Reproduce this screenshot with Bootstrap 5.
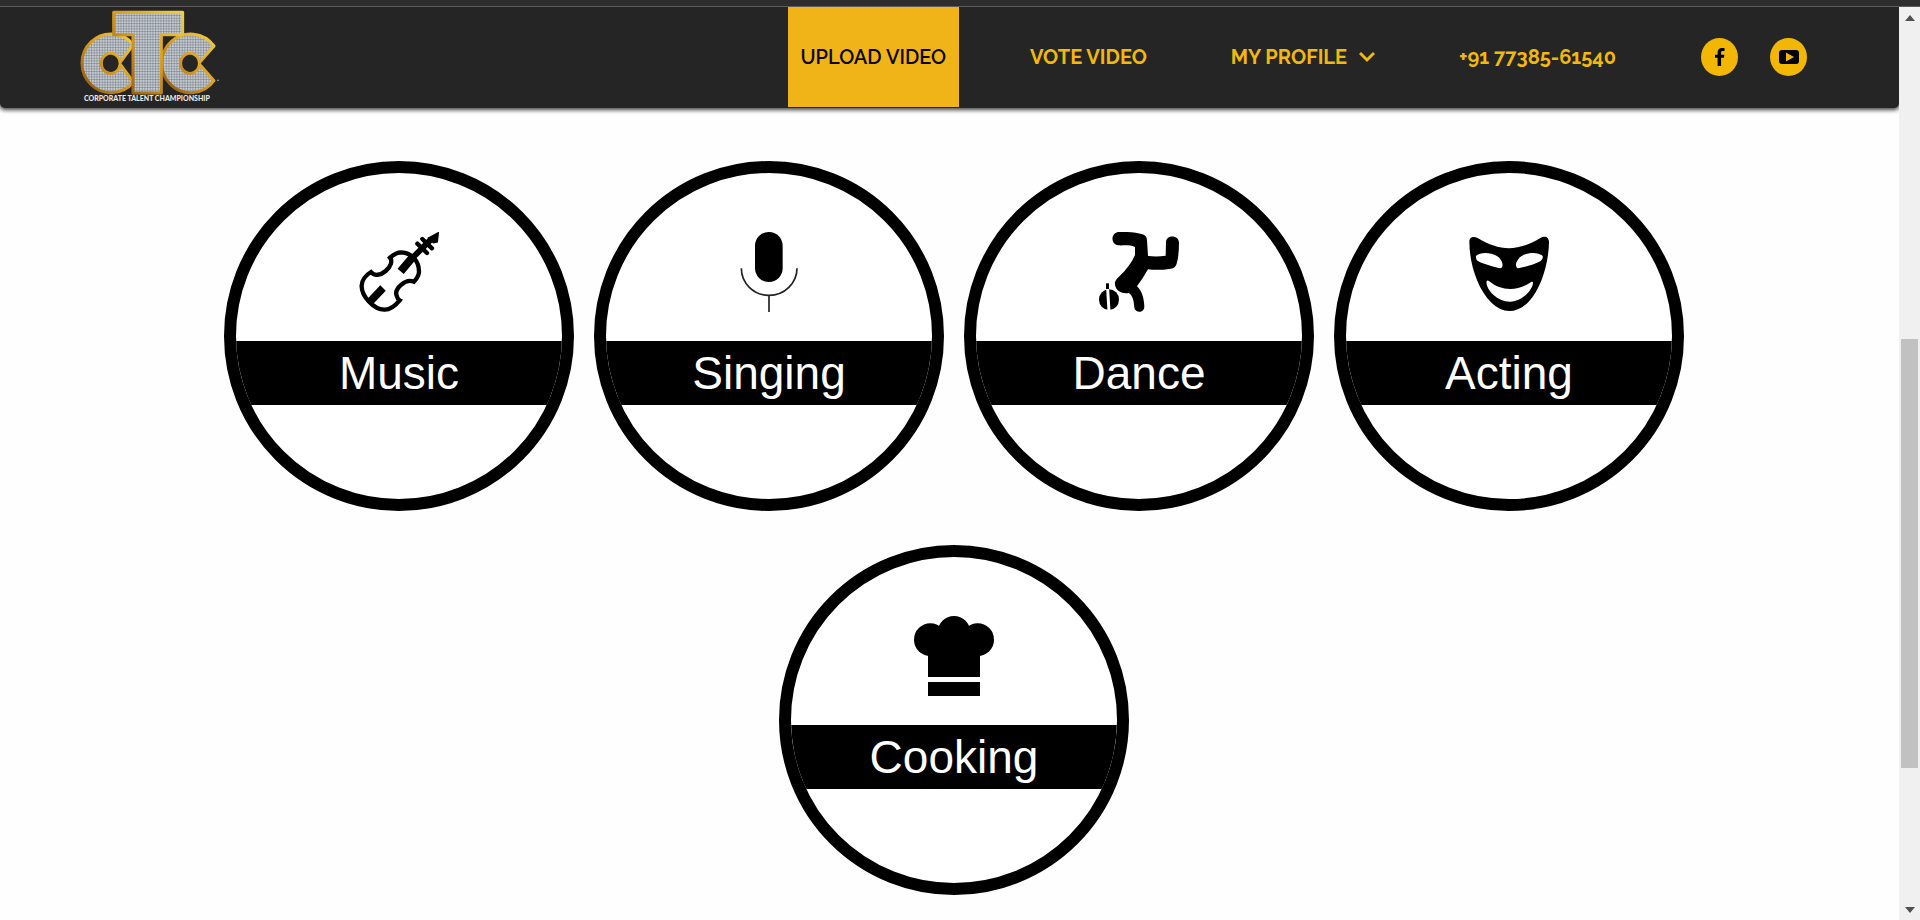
<!DOCTYPE html>
<html lang="en">
<head>
<meta charset="utf-8">
<meta name="viewport" content="width=device-width, initial-scale=1">
<title>Corporate Talent Championship</title>
<link href="https://cdn.jsdelivr.net/npm/bootstrap@5.3.0/dist/css/bootstrap.min.css" rel="stylesheet">
<style>
  body { font-family: "Liberation Sans", Arial, sans-serif; background: #2d2d2d; }
  .top-strip { height: 7px; background: #2d2d2d; border-bottom: 1px solid #5c5c5c; }
  .page-pane { background: #fefefe; min-width: 0; }
  .site-header { height: 101px; background: #252525; border-radius: 0 0 5px 5px; box-shadow: 0 1px 4px 1px rgba(0,0,0,.75); padding: 0 92px 0 80px; }
  .site-header .navbar-brand { padding: 0; margin: 0; }
  .main-menu { gap: 58px; font-family: Raleway, Lato, sans-serif; font-size: 20px; font-weight: 700; }
  .navbar-expand .main-menu .nav-link { height: 100px; padding: 0 13px; color: #f1b80d; white-space: nowrap; }
  .navbar-expand .main-menu .nav-link.active { background: #f0b418; color: #0b0600; font-weight: 600; }
  .profile-link { gap: 12px; }
  .social { gap: 32px; margin-left: 72px; height: 100px; }
  .social a { width: 37px; height: 38px; background: #f2b705; color: #000; }
  .categories { gap: 34px 20px; padding: 53px 200px 0 209px; }
  .disc { width: 350px; height: 350px; border: 12px solid #000; padding-top: 59px; color: #000; overflow: hidden; background: #fff; }
  .disc svg { width: 80px; height: 80px; margin-bottom: 29px; }
  .disc-label { height: 64px; line-height: 64px; font-size: 46px; background: #000; color: #fff; }
  .scroll-rail { width: 21px; background: #f0f0f0; }
  .rail-arrow { height: 21px; }
  .rail-thumb { background: #c1c1c1; margin: 0 2px; }
</style>
</head>
<body class="vh-100 overflow-hidden d-flex flex-column">
<div class="top-strip flex-shrink-0"></div>
<div class="d-flex flex-grow-1 overflow-hidden">
  <div class="page-pane flex-grow-1 overflow-hidden">
    <header class="site-header navbar navbar-expand flex-nowrap align-items-start">
      <a class="navbar-brand" href="#" aria-label="Corporate Talent Championship">
        <svg class="d-block" width="142" height="100" viewBox="0 0 142 100">
          <defs>
            <linearGradient id="gold" x1="0" x2="1" y1="1" y2="0"><stop offset="0" stop-color="#87500e"/><stop offset=".5" stop-color="#d79b20"/><stop offset="1" stop-color="#f1cf3e"/></linearGradient>
            <pattern id="studs" width="8" height="8" patternUnits="userSpaceOnUse"><rect width="8" height="8" fill="#858a94"/><rect width="6" height="6" fill="#c5ccd0"/></pattern>
          </defs>
          <g transform="scale(.3333) translate(-60 -21)" fill="url(#studs)" stroke="url(#gold)" stroke-width="9" stroke-linejoin="round">
            <path d="M220 134A87 88 0 1 0 220 246L180 192A28 30 0 1 1 180 188Z"/>
            <path d="M462 138A87 88 0 1 0 462 242L418 192A28 30 0 1 1 418 188Z"/>
            <path d="M161 37H368V104H304V279H219V104H161Z"/>
            <circle cx="474" cy="241" r="2" stroke-width="1" stroke="#aaa"/>
          </g>
          <text x="4" y="94" font-family="Lato, sans-serif" font-weight="900" font-size="7" fill="#e9e9e9">CORPORATE TALENT CHAMPIONSHIP</text>
        </svg>
      </a>
      <nav class="navbar-nav main-menu ms-auto">
        <a class="nav-link active d-flex align-items-center" href="#">UPLOAD VIDEO</a>
        <a class="nav-link d-flex align-items-center" href="#">VOTE VIDEO</a>
        <a class="nav-link profile-link d-flex align-items-center" href="#">MY PROFILE
          <svg width="16" height="12" viewBox="0 0 16 12" fill="none" stroke="currentColor" stroke-width="3"><path d="M1 2l7 7 7-7"/></svg></a>
        <a class="nav-link d-flex align-items-center" href="tel:+917738561540">+91 77385-61540</a>
      </nav>
      <div class="social d-flex align-items-center">
        <a class="rounded-circle d-flex align-items-center justify-content-center" href="#" aria-label="Facebook"><svg width="12" height="20" viewBox="0 0 12 20" fill="currentColor"><path d="M3.600 19V10.800H1V7.800h2.600V5.500C3.600 2.500 5.300 1 7.800 1H10.500v3H8.800C7.500 4 7.100 4.600 7.100 5.700v2.100h3.300l-.5 3H7.100V19z"/></svg></a>
        <a class="rounded-circle d-flex align-items-center justify-content-center" href="#" aria-label="YouTube"><svg width="20" height="14" viewBox="0 0 20 14" fill="currentColor" fill-rule="evenodd"><path d="M3 0Q10-.5 17 0Q20 0 20 3V11Q20 14 17 14H3Q0 14 0 11V3Q0 0 3 0ZM7 2.500V11.500L15 7Z"/></svg></a>
      </div>
    </header>

    <main class="categories d-flex flex-wrap justify-content-center text-center">
      <a class="disc rounded-circle text-decoration-none" href="#">
        <svg viewBox="446 246 240 240" fill="none" stroke="#000" stroke-width="13">
          <path d="M539 323C551 312 562 307 573 307C604 308 626 333 626 365C626 377 619 386 611 395C585 384 551 417 559 437Q561 447 568 451C553 469 539 480 522 479C490 478 453 438 454 407C454 391 467 375 482 366C492 379 511 376 526 363C542 350 547 333 539 323Z"/>
          <path d="M571 364L610 318" stroke-width="24"/><path d="M606 324L662 268" stroke-width="18"/>
          <path d="M636 267L665 295M621 281L650 309" stroke-width="13" stroke-linecap="round"/>
          <path d="M654 264L684 248L681 276L669 278Z" fill="#000" stroke-width="4"/>
          <path d="M480 454L518 414" stroke-width="23"/>
        </svg>
        <div class="disc-label">Music</div>
      </a>
      <a class="disc rounded-circle text-decoration-none" href="#">
        <svg viewBox="29 66 240 240"><rect x="107" y="66" width="83" height="150" rx="41"/><path d="M66 175C66 219 102 256 149 256S233 219 233 175M149 256V306" fill="none" stroke="#222" stroke-width="5"/></svg>
        <div class="disc-label">Singing</div>
      </a>
      <a class="disc rounded-circle text-decoration-none" href="#">
        <svg viewBox="60 66 240 240">
          <path d="M118 66C145 65 174 67 190 73Q203 77 204 90L207 138Q235 141 260 137L261 96C262 74 299 74 300 98C300 120 298 145 293 161Q289 174 275 176Q240 182 207 178Q192 205 174 229C190 244 195 266 196 290C195 310 169 310 166 293C165 273 161 256 149 249C123 253 105 236 108 216Q111 207 122 198C142 180 158 158 168 135V111C149 103 135 107 118 106C94 101 95 70 118 66Z"/>
          <ellipse cx="90" cy="269" rx="30" ry="31"/><path d="M81 220H90V238H81Z"/><path d="M86 237L90 303" stroke="#fff" stroke-width="9"/>
        </svg>
        <div class="disc-label">Dance</div>
      </a>
      <a class="disc rounded-circle text-decoration-none" href="#">
        <svg viewBox="60 66 240 240" fill-rule="evenodd"><path d="M61 94C61 80 75 77 87 85C151 124 208 125 274 84C289 76 300 82 300 97C299 157 278 234 239 275C204 311 162 313 126 277C85 235 61 160 61 94ZM81 138C96 122 143 128 155 149C162 157 163 172 155 175C140 173 105 163 88 154Q79 149 81 138ZM281 138C264 122 219 128 207 149C199 158 199 170 206 175C227 171 257 164 275 153Q283 147 281 138ZM113 213C108 236 144 276 184 275C224 274 252 235 252 218Q251 212 243 218C205 244 156 244 121 214Q116 209 113 213Z"/></svg>
        <div class="disc-label">Acting</div>
      </a>
      <a class="disc rounded-circle text-decoration-none" href="#">
        <svg viewBox="45 48 240 240"><circle cx="94" cy="119" r="49"/><circle cx="165" cy="97" r="49"/><circle cx="236" cy="119" r="49"/><path d="M87 110H243V231H87ZM87 246H243V288H87Z"/></svg>
        <div class="disc-label">Cooking</div>
      </a>
    </main>
  </div>
  <div class="scroll-rail flex-shrink-0 d-flex flex-column" aria-hidden="true">
    <div class="rail-arrow d-flex align-items-center justify-content-center"><svg width="10" height="6"><path d="M0 6L5 0L10 6Z" fill="#505050"/></svg></div>
    <div style="flex: 311 0 0"></div>
    <div class="rail-thumb" style="flex: 429 0 0"></div>
    <div style="flex: 131 0 0"></div>
    <div class="rail-arrow d-flex align-items-center justify-content-center"><svg width="10" height="6"><path d="M0 0H10L5 6Z" fill="#505050"/></svg></div>
  </div>
</div>
<script src="https://cdn.jsdelivr.net/npm/bootstrap@5.3.0/dist/js/bootstrap.bundle.min.js"></script>
</body>
</html>
